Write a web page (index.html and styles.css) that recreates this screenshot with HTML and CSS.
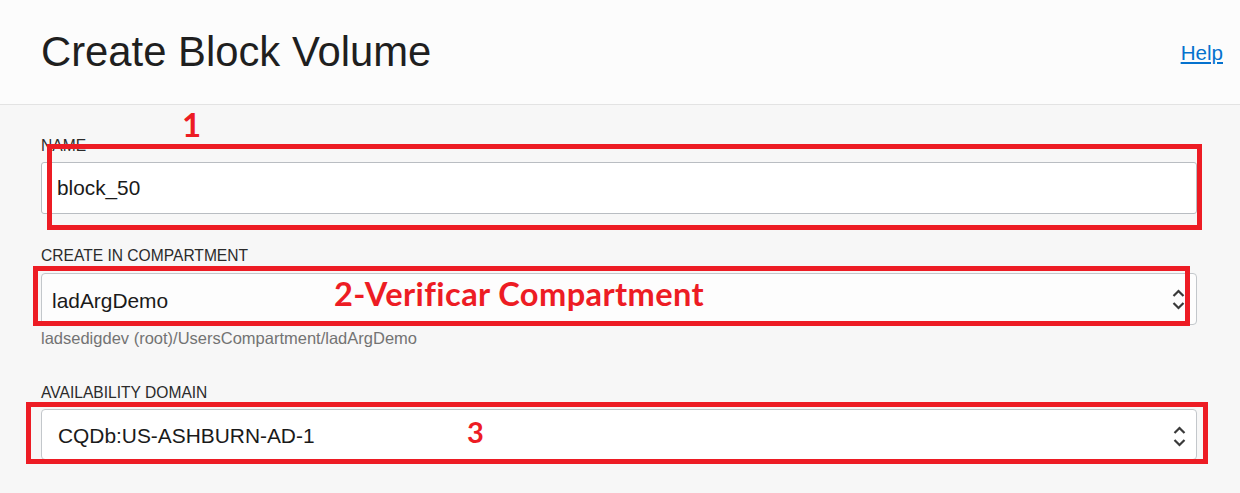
FILE: index.html
```html
<!DOCTYPE html>
<html lang="en">
<head>
<meta charset="utf-8">
<title>Create Block Volume</title>
<link rel="stylesheet" href="styles.css">
</head>
<body>
<div class="page">
  <header class="header">
    <h1 class="title">Create Block Volume</h1>
    <a class="help" href="#">Help</a>
  </header>
  <main class="form">
    <div class="field">
      <label class="label">NAME</label>
      <input class="input" type="text" value="block_50">
    </div>
    <div class="field field-gap">
      <label class="label">CREATE IN COMPARTMENT</label>
      <div class="select select-comp">
        <span class="select-text">ladArgDemo</span>
        <svg class="chev" width="13" height="21" viewBox="0 0 13 21"><path d="M1.5 7 L6.5 2 L11.5 7 M1.5 14 L6.5 19 L11.5 14" fill="none" stroke="#3a3a3a" stroke-width="2.2"/></svg>
      </div>
      <div class="hint">ladsedigdev (root)/UsersCompartment/ladArgDemo</div>
    </div>
    <div class="field field-gap2">
      <label class="label">AVAILABILITY DOMAIN</label>
      <div class="select select-ad">
        <span class="select-text">CQDb:US-ASHBURN-AD-1</span>
        <svg class="chev" width="13" height="21" viewBox="0 0 13 21"><path d="M1.5 7 L6.5 2 L11.5 7 M1.5 14 L6.5 19 L11.5 14" fill="none" stroke="#3a3a3a" stroke-width="2.2"/></svg>
      </div>
    </div>
  </main>

  <div class="mark mark-1"></div>
  <div class="mark mark-2"></div>
  <div class="mark mark-3"></div>
  <div class="note note-1">1</div>
  <div class="note note-2">2-Verificar Compartment</div>
  <div class="note note-3">3</div>
</div>
</body>
</html>
```

FILE: styles.css
```css
* { box-sizing: border-box; }

html, body {
  margin: 0;
  padding: 0;
}

body {
  background: #f7f7f7;
  font-family: "Liberation Sans", Arial, sans-serif;
  color: #262626;
}

.page {
  position: relative;
  width: 1240px;
  height: 493px;
  overflow: hidden;
}

.header {
  height: 105px;
  background: #fcfcfc;
  border-bottom: 1px solid #e3e3e3;
  display: flex;
  justify-content: space-between;
  align-items: flex-start;
  padding: 28px 17px 0 41px;
}

.title {
  margin: 0;
  font-weight: normal;
  font-size: 41.8px;
  line-height: 48px;
  color: #1f1f1f;
}

.help {
  margin-top: 13px;
  font-size: 20.6px;
  line-height: 24px;
  color: #0572ce;
  text-decoration: underline;
  text-underline-offset: 2px;
  text-decoration-thickness: 2px;
}

.form {
  display: flex;
  flex-direction: column;
  padding: 32px 43px 0 41px;
}

.field {
  display: flex;
  flex-direction: column;
}

.field-gap { margin-top: 33px; }
.field-gap2 { margin-top: 36px; }

.label {
  font-size: 15.6px;
  line-height: 18px;
  color: #2b2b2b;
  margin-bottom: 7px;
}

.field-gap .label { margin-bottom: 8px; }

.input {
  width: 100%;
  height: 52px;
  border: 1px solid #b9bdc2;
  border-radius: 3px;
  background: #ffffff;
  font-family: "Liberation Sans", Arial, sans-serif;
  font-size: 20.8px;
  color: #1a1a1a;
  padding: 0 15px;
  outline: none;
}

.select {
  display: flex;
  align-items: center;
  justify-content: space-between;
  height: 52px;
  border: 1px solid #c3c7cb;
  border-radius: 4px;
  background: #ffffff;
  font-size: 20.9px;
  color: #1a1a1a;
}

.select-comp {
  background: #fdfdfd;
  padding: 4px 11px 0 10px;
}

.select-comp .chev { margin-top: -4px; }

.select-ad {
  height: 51px;
  padding: 2px 10px 0 16px;
}

.select-ad .chev { margin-top: 1px; }

.hint {
  margin-top: 3px;
  font-size: 16.5px;
  line-height: 20px;
  color: #737373;
}

/* annotation overlays */
.mark {
  position: absolute;
  border: 5px solid #ed1c24;
}

.mark-1 { left: 47px; top: 144px; width: 1155px; height: 86px; }
.mark-2 { left: 33px; top: 266px; width: 1157px; height: 60px; }
.mark-3 { left: 26px; top: 402px; width: 1182px; height: 62px; }

.note {
  position: absolute;
  font-family: Lato, "Open Sans", sans-serif;
  font-weight: bold;
  line-height: 1;
  color: #ed1c24;
  white-space: nowrap;
}

.note-1 { left: 182px; top: 108px; font-size: 33px; }
.note-2 { left: 334px; top: 278px; font-size: 32.6px; letter-spacing: 0.4px; }
.note-3 { left: 467px; top: 417px; font-size: 29px; }
```
